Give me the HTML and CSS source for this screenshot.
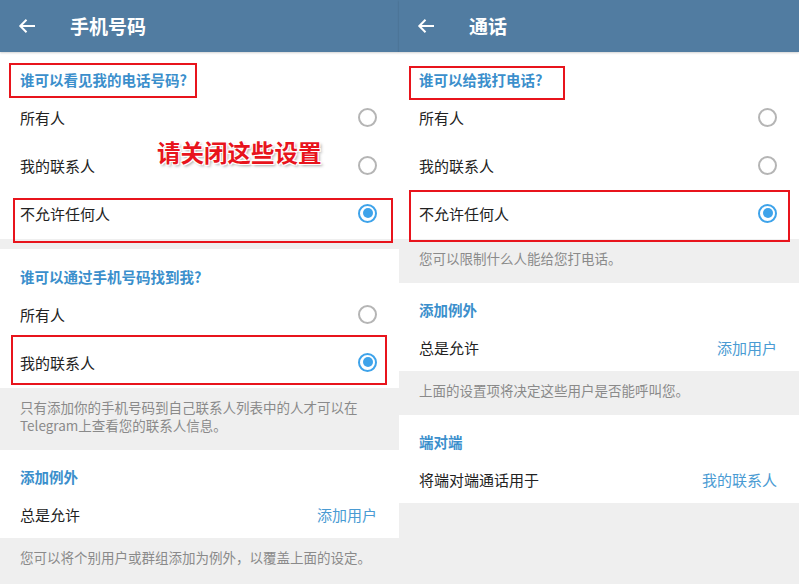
FILE: index.html
```html
<!DOCTYPE html>
<html lang="zh-CN">
<head>
  <meta charset="UTF-8">
  <meta name="viewport" content="width=device-width, initial-scale=1.0">
  <title>隐私设置</title>
  <link rel="stylesheet" href="styles.css">
</head>
<body>
  <div class="screens">

    <!-- 手机号码 -->
    <section class="screen screen-left">
      <header class="toolbar">
        <svg class="back" width="18" height="16" viewBox="0 0 18 16"><path d="M17 8H2.5M8.5 1.8L2.3 8l6.2 6.2" fill="none" stroke="#fff" stroke-width="2"/></svg>
        <h1>手机号码</h1>
      </header>

      <div class="card">
        <div class="card-title">谁可以看见我的电话号码?</div>
        <div class="option"><span>所有人</span><span class="radio"></span></div>
        <div class="option"><span>我的联系人</span><span class="radio"></span></div>
        <div class="option"><span>不允许任何人</span><span class="radio checked"></span></div>
      </div>
      <div class="gap"></div>

      <div class="card">
        <div class="card-title">谁可以通过手机号码找到我?</div>
        <div class="option"><span>所有人</span><span class="radio"></span></div>
        <div class="option"><span>我的联系人</span><span class="radio checked"></span></div>
      </div>
      <p class="info">只有添加你的手机号码到自己联系人列表中的人才可以在<br>Telegram上查看您的联系人信息。</p>

      <div class="card short">
        <div class="card-title">添加例外</div>
        <div class="option"><span>总是允许</span><span class="value">添加用户</span></div>
      </div>
      <p class="info">您可以将个别用户或群组添加为例外，以覆盖上面的设定。</p>

      <div class="mark mark-a"></div>
      <div class="mark mark-b"></div>
      <div class="mark mark-c"></div>
      <div class="callout">请关闭这些设置</div>
    </section>

    <!-- 通话 -->
    <section class="screen screen-right">
      <header class="toolbar">
        <svg class="back" width="18" height="16" viewBox="0 0 18 16"><path d="M17 8H2.5M8.5 1.8L2.3 8l6.2 6.2" fill="none" stroke="#fff" stroke-width="2"/></svg>
        <h1>通话</h1>
      </header>

      <div class="card">
        <div class="card-title">谁可以给我打电话?</div>
        <div class="option"><span>所有人</span><span class="radio"></span></div>
        <div class="option"><span>我的联系人</span><span class="radio"></span></div>
        <div class="option"><span>不允许任何人</span><span class="radio checked"></span></div>
      </div>
      <p class="info">您可以限制什么人能给您打电话。</p>

      <div class="card short">
        <div class="card-title">添加例外</div>
        <div class="option"><span>总是允许</span><span class="value">添加用户</span></div>
      </div>
      <p class="info">上面的设置项将决定这些用户是否能呼叫您。</p>

      <div class="card short">
        <div class="card-title">端对端</div>
        <div class="option"><span>将端对端通话用于</span><span class="value">我的联系人</span></div>
      </div>

      <div class="mark mark-d"></div>
      <div class="mark mark-e"></div>
    </section>

  </div>
</body>
</html>
```

FILE: styles.css
```css
body {
  margin: 0;
  font-family: "Noto Sans CJK SC", "Noto Sans", sans-serif;
  background-color: #fff;
}

.screens {
  display: flex;
  width: 799px;
  height: 584px;
  overflow: hidden;
}

.screen {
  position: relative;
  display: flex;
  flex-direction: column;
  background-color: #efefef;
}

.screen-left {
  width: 399px;
}

.screen-right {
  width: 400px;
}

/* toolbar */

.toolbar {
  display: flex;
  align-items: center;
  height: 52px;
  flex-shrink: 0;
  background-color: #517ca1;
  box-shadow: 0 1px 2px rgba(0, 0, 0, 0.18);
  position: relative;
  z-index: 1;
}

.back {
  margin-left: 18px;
}

.toolbar h1 {
  margin: 0 0 0 34px;
  color: #fff;
  font-size: 19px;
  font-weight: bold;
  line-height: 24px;
}

/* white cards */

.card {
  background-color: #fff;
  padding-bottom: 2px;
}

.card-title {
  padding: 18px 20px 3px;
  font-size: 14.5px;
  font-weight: bold;
  line-height: 20px;
  color: #3b8fcc;
}

.card.short {
  padding-bottom: 0;
}

.card.short .card-title {
  padding-top: 17px;
}

.option {
  display: flex;
  align-items: center;
  justify-content: space-between;
  height: 48px;
  padding: 0 22px 0 20px;
  font-size: 15px;
  color: #222;
}

.value {
  color: #4a9bd3;
}

.radio {
  position: relative;
  width: 19px;
  height: 19px;
  border: 2px solid #b5b5b5;
  border-radius: 50%;
  box-sizing: border-box;
}

.radio.checked {
  border-color: #3ea3ea;
}

.radio.checked::after {
  content: "";
  position: absolute;
  left: 2.5px;
  top: 2.5px;
  width: 10px;
  height: 10px;
  border-radius: 50%;
  background-color: #3ea3ea;
}

.gap {
  height: 10px;
}

.info {
  margin: 0;
  padding: 10px 20px 16px;
  font-size: 13.5px;
  line-height: 18px;
  color: #8a8a8a;
}

/* red annotations */

.mark {
  position: absolute;
  border: 2px solid #e8141c;
  box-sizing: border-box;
}

.mark-a { left: 9px; top: 63px; width: 188px; height: 35px; }
.mark-b { left: 13px; top: 198px; width: 380px; height: 45px; }
.mark-c { left: 11px; top: 335px; width: 376px; height: 50px; }
.mark-d { left: 10px; top: 66px; width: 156px; height: 34px; }
.mark-e { left: 10px; top: 190px; width: 381px; height: 52px; }

.callout {
  position: absolute;
  left: 157px;
  top: 137px;
  font-size: 23.5px;
  font-weight: bold;
  line-height: 30px;
  color: #e8141c;
  text-shadow: 1px 1px 0 #fff, -1px -1px 0 #fff, 1px -1px 0 #fff, -1px 1px 0 #fff, 2px 2px 3px rgba(0, 0, 0, 0.35);
}
```
